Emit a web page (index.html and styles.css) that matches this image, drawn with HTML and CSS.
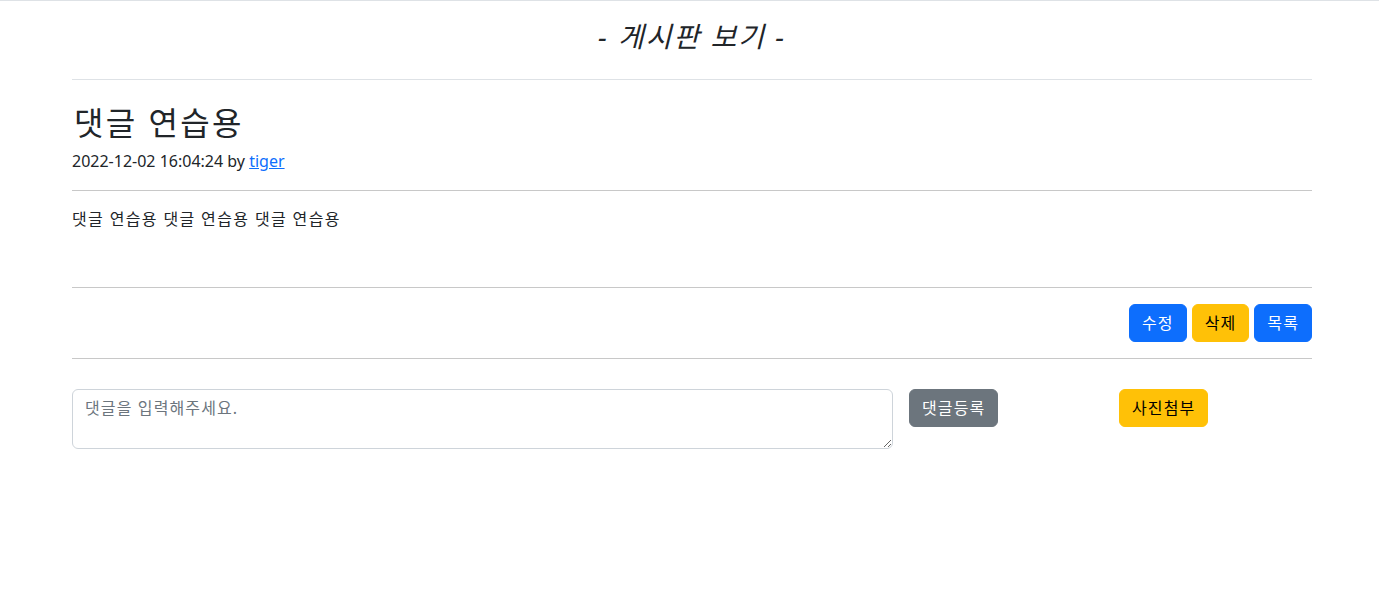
FILE: index.html
```html
<!DOCTYPE html>
<html lang="ko">
<head>
<meta charset="utf-8">
<title>게시판 보기</title>
<link rel="stylesheet" href="styles.css">
</head>
<body>
<div class="topline"></div>
<div class="container">
  <header class="page-head">
    <h3 class="page-title">- 게시판 보기 -</h3>
  </header>
  <article class="post">
    <h2 class="post-title">댓글 연습용</h2>
    <div class="post-meta">2022-12-02 16:04:24 by <a href="#">tiger</a></div>
    <hr class="rule">
    <div class="post-body">댓글 연습용 댓글 연습용 댓글 연습용</div>
    <hr class="rule">
    <div class="actions">
      <button class="btn btn-primary">수정</button>
      <button class="btn btn-warning">삭제</button>
      <button class="btn btn-primary">목록</button>
    </div>
    <hr class="rule">
  </article>
  <div class="comment-row">
    <textarea class="comment-input" placeholder="댓글을 입력해주세요."></textarea>
    <div><button class="btn btn-secondary">댓글등록</button></div>
    <div><button class="btn btn-warning">사진첨부</button></div>
  </div>
</div>
</body>
</html>
```
FILE: styles.css
```css
html, body {
  margin: 0;
  padding: 0;
  background: #fff;
}
body {
  font-family: "Noto Sans", "Noto Sans CJK KR", sans-serif;
  color: #212529;
  font-size: 16px;
  line-height: 1.5;
}
.topline {
  border-top: 1px solid #dee2e6;
}
.container {
  width: 1240px;
  margin: 0 0 0 72px;
}
.page-head {
  padding: 18px 0 26px;
  border-bottom: 1px solid #dee2e6;
}
.page-title {
  margin: 0;
  text-align: center;
  font-size: 28px;
  font-weight: 400;
  font-style: italic;
  line-height: 34px;
  letter-spacing: 0.07em;
}
.post-title {
  margin: 24px 0 0;
  font-size: 32px;
  font-weight: 400;
  line-height: 38px;
  padding-left: 2px;
  letter-spacing: 0.075em;
}
.post-meta {
  margin-top: 9px;
  font-size: 16px;
  line-height: 21px;
}
.post-meta a {
  color: #0d6efd;
  text-decoration: underline;
}
.rule {
  margin: 0;
  border: 0;
  border-top: 1px solid #c8c8c8;
}
.post-meta + .rule {
  margin-top: 18px;
}
.post-body {
  font-size: 16px;
  line-height: 22px;
  padding: 17px 0 0;
  box-sizing: border-box;
  height: 96px;
  letter-spacing: 0.085em;
}
.actions {
  display: flex;
  justify-content: flex-end;
  gap: 5px;
  padding: 16px 0;
}
.btn {
  font-family: inherit;
  font-size: 16px;
  line-height: 24px;
  padding: 6px 12px;
  border: 1px solid transparent;
  border-radius: 6px;
  cursor: pointer;
  letter-spacing: 0.07em;
}
.btn-primary {
  background: #0d6efd;
  border-color: #0d6efd;
  color: #fff;
}
.btn-warning {
  background: #ffc107;
  border-color: #ffc107;
  color: #000;
}
.btn-secondary {
  background: #6c757d;
  border-color: #6c757d;
  color: #fff;
}
.comment-row {
  display: grid;
  grid-template-columns: 821px 194px 1fr;
  column-gap: 16px;
  margin-top: 30px;
  align-items: start;
}
.comment-input {
  box-sizing: border-box;
  width: 821px;
  height: 60px;
  padding: 6px 12px;
  font-family: inherit;
  font-size: 16px;
  line-height: 24px;
  color: #212529;
  border: 1px solid #ced4da;
  border-radius: 6px;
  resize: vertical;
  letter-spacing: 0.07em;
}
.comment-input::placeholder {
  color: #6c757d;
}
```
